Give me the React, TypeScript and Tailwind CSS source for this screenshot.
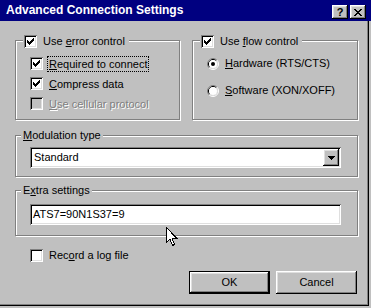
import type { ReactNode } from 'react'

// Win95 bevels
const raised = 'shadow-[inset_-1px_-1px_0_#000,inset_1px_1px_0_#fff,inset_-2px_-2px_0_#808080,inset_2px_2px_0_#dfdfdf]'
const sunken = 'shadow-[inset_1px_1px_0_#808080,inset_-1px_-1px_0_#fff,inset_2px_2px_0_#000,inset_-2px_-2px_0_#dfdfdf]'
const etched = 'border border-[#808080] shadow-[inset_1px_1px_0_#fff,1px_1px_0_#fff]'

function Check({ checked = false, disabled = false }: { checked?: boolean; disabled?: boolean }) {
  return (
    <span className={`flex h-[13px] w-[13px] shrink-0 items-center justify-center ${disabled ? 'bg-[#c0c0c0]' : 'bg-white'} ${sunken}`}>
      {checked && (
        <svg width="7" height="7" viewBox="0 0 7 7" shapeRendering="crispEdges">
          <path
            fill="#000"
            d="M6 0h1v1h-1z M5 1h2v1h-2z M0 2h1v1h-1z M4 2h3v1h-3z M0 3h2v1h-2z M3 3h3v1h-3z M0 4h5v1h-5z M1 5h3v1h-3z M2 6h1v1h-1z"
          />
        </svg>
      )}
    </span>
  )
}

function Radio({ checked = false }: { checked?: boolean }) {
  return (
    <svg width="12" height="12" viewBox="0 0 12 12" className="shrink-0">
      <path d="M2.11 9.89A5.5 5.5 0 0 1 9.89 2.11" fill="none" stroke="#808080" />
      <path d="M9.89 2.11A5.5 5.5 0 0 1 2.11 9.89" fill="none" stroke="#fff" />
      <path d="M2.82 9.18A4.5 4.5 0 0 1 9.18 2.82" fill="none" stroke="#000" />
      <path d="M9.18 2.82A4.5 4.5 0 0 1 2.82 9.18" fill="none" stroke="#dfdfdf" />
      <circle cx="6" cy="6" r="4" fill="#fff" />
      {checked && <circle cx="6" cy="6" r="2" fill="#000" />}
    </svg>
  )
}

function Mn({ children }: { children: ReactNode }) {
  return <span className="underline underline-offset-[1px]">{children}</span>
}

function CheckRow({ checked, disabled, focused, children }: { checked?: boolean; disabled?: boolean; focused?: boolean; children: ReactNode }) {
  return (
    <div className="flex h-[13px] items-center">
      <Check checked={checked} disabled={disabled} />
      <span
        className={`ml-[4px] border px-[1px] leading-[14px] ${focused ? 'border-dotted border-black' : 'border-transparent'} ${
          disabled ? 'text-[#808080] [text-shadow:1px_1px_0_#fff]' : ''
        }`}
      >
        {children}
      </span>
    </div>
  )
}

function RadioRow({ checked, children }: { checked?: boolean; children: ReactNode }) {
  return (
    <div className="flex h-[13px] items-center">
      <Radio checked={checked} />
      <span className="ml-[6px]">{children}</span>
    </div>
  )
}

function GroupTitle({ children }: { children: ReactNode }) {
  return (
    <div className="absolute left-[5px] top-[-7px] flex h-[13px] items-center bg-[#c0c0c0] pl-[2px] pr-[2px]">
      {children}
    </div>
  )
}

function CheckTitle({ checked, children }: { checked?: boolean; children: ReactNode }) {
  return (
    <div className="absolute left-[7px] top-[-6px] flex h-[13px] items-center bg-[#c0c0c0] pl-[1px] pr-[4px]">
      <Check checked={checked} />
      <span className="ml-[6px]">{children}</span>
    </div>
  )
}

export default function App() {
  return (
    <div className="relative h-[308px] w-[371px] overflow-hidden bg-[#c0c0c0] font-['Liberation_Sans',Arial,sans-serif] text-[11px] text-black">
      {/* Title bar */}
      <div className="flex h-[21px] w-[371px] items-start bg-[#000080] pl-[6px] pr-[5px]">
        <span className="mt-[3px] flex-1 text-[12px] font-bold leading-[15px] text-white">Advanced Connection Settings</span>
        <div className="mt-[5px] flex gap-[2px]">
          <div className={`flex h-[14px] w-[16px] items-center justify-center bg-[#c0c0c0] ${raised}`}>
            <span className="text-[11px] font-bold leading-[11px]">?</span>
          </div>
          <div className={`flex h-[14px] w-[16px] items-center justify-center bg-[#c0c0c0] ${raised}`}>
            <svg width="8" height="7" viewBox="0 0 8 7" shapeRendering="crispEdges">
              <path
                fill="#000"
                d="M0 0h2v1h-2z M6 0h2v1h-2z M1 1h2v1h-2z M5 1h2v1h-2z M2 2h4v1h-4z M3 3h2v1h-2z M2 4h4v1h-4z M1 5h2v1h-2z M5 5h2v1h-2z M0 6h2v1h-2z M6 6h2v1h-2z"
              />
            </svg>
          </div>
        </div>
      </div>

      {/* Dialog body */}
      <div className="h-[285px] w-[369px] border-b border-r border-b-black border-r-black pl-[15px] pt-[19px] shadow-[inset_-1px_-1px_0_#808080]">
        <div className="flex gap-[12px]">
          <div className={`relative h-[80px] w-[165px] ${etched}`}>
            <CheckTitle checked>
              Use <Mn>e</Mn>rror control
            </CheckTitle>
            <div className="flex flex-col gap-[7px] pl-[14px] pt-[16px]">
              <CheckRow checked focused>
                <Mn>R</Mn>equired to connect
              </CheckRow>
              <CheckRow checked>
                <Mn>C</Mn>ompress data
              </CheckRow>
              <CheckRow disabled>
                <Mn>U</Mn>se cellular protocol
              </CheckRow>
            </div>
          </div>
          <div className={`relative h-[80px] w-[166px] ${etched}`}>
            <CheckTitle checked>
              Use <Mn>f</Mn>low control
            </CheckTitle>
            <div className="flex flex-col gap-[14px] pl-[14px] pt-[16px]">
              <RadioRow checked>
                <Mn>H</Mn>ardware (RTS/CTS)
              </RadioRow>
              <RadioRow>
                <Mn>S</Mn>oftware (XON/XOFF)
              </RadioRow>
            </div>
          </div>
        </div>

        <div className={`relative mt-[15px] h-[42px] w-[343px] ${etched}`}>
          <GroupTitle>
            <Mn>M</Mn>odulation type
          </GroupTitle>
          <div className="pl-[14px] pt-[11px]">
            <div className={`flex h-[21px] w-[311px] items-center bg-white p-[2px] ${sunken}`}>
              <span className="flex-1 pl-[2px]">Standard</span>
              <div className={`flex h-[17px] w-[16px] items-center justify-center bg-[#c0c0c0] ${raised}`}>
                <svg width="7" height="4" viewBox="0 0 7 4" shapeRendering="crispEdges">
                  <path fill="#000" d="M0 0h7v1h-7z M1 1h5v1h-5z M2 2h3v1h-3z M3 3h1v1h-1z" />
                </svg>
              </div>
            </div>
          </div>
        </div>

        <div className={`relative mt-[13px] h-[46px] w-[343px] ${etched}`}>
          <GroupTitle>
            E<Mn>x</Mn>tra settings
          </GroupTitle>
          <div className="pl-[14px] pt-[13px]">
            <div className={`flex h-[21px] w-[311px] items-center bg-white px-[3px] ${sunken}`}>ATS7=90N1S37=9</div>
          </div>
        </div>

        <div className="mt-[13px] flex h-[13px] items-center pl-[15px]">
          <Check />
          <span className="ml-[6px]">
            Rec<Mn>o</Mn>rd a log file
          </span>
        </div>

        <div className="mt-[9px] flex w-[342px] justify-end gap-[6px]">
          <div className="h-[23px] w-[81px] border border-black">
            <div className={`flex h-full w-full items-center justify-center bg-[#c0c0c0] ${raised}`}>OK</div>
          </div>
          <div className={`flex h-[23px] w-[81px] items-center justify-center bg-[#c0c0c0] ${raised}`}>Cancel</div>
        </div>
      </div>

      {/* Mouse pointer */}
      <svg className="absolute left-[166px] top-[227px]" width="12" height="20" viewBox="0 0 12 20" shapeRendering="crispEdges">
        <path d="M0.5 0.5V15.5L4 12L6.5 18.5L8.5 17.5L6 11H10.5Z" fill="#fff" stroke="#000" />
      </svg>
    </div>
  )
}
